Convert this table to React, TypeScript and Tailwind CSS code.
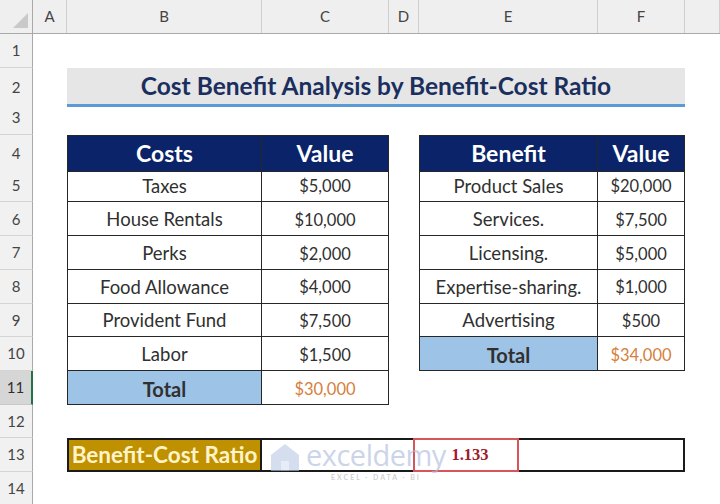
import React from "react";

const grid = "grid grid-cols-[33px_34px_195px_127px_30px_179px_87px_35px]";

function RowNum({ n, active = false }: { n: number; active?: boolean }) {
  return (
    <div
      className={
        active
          ? "flex items-center justify-center bg-[#d6d6d6] border-b border-[#c8c8c8] border-r-2 border-r-[#217346] text-[15px] text-[#2f2f2f]"
          : "flex items-center justify-center bg-[#f1f1f1] border-b border-[#d4d4d4] border-r border-r-[#a9a9a9] text-[15px] text-[#444]"
      }
    >
      {n}
    </div>
  );
}

const td = "flex items-center justify-center pt-[3px] border-b-[1.5px] border-r-[1.5px] border-[#262626] text-[#303030] whitespace-nowrap";
const th = "flex items-center justify-center bg-[#0b2469] border-t-[1.5px] border-b-[1.5px] border-r-[1.5px] border-[#262626] text-[23px] font-bold text-white";
const label = "text-[18.5px]";
const num = "text-[16.5px]";

export default function App() {
  const costs = [
    ["Taxes", "$5,000"],
    ["House Rentals", "$10,000"],
    ["Perks", "$2,000"],
    ["Food Allowance", "$4,000"],
    ["Provident Fund", "$7,500"],
    ["Labor", "$1,500"],
  ];
  const benefits = [
    ["Product Sales", "$20,000"],
    ["Services.", "$7,500"],
    ["Licensing.", "$5,000"],
    ["Expertise-sharing.", "$1,000"],
    ["Advertising", "$500"],
  ];

  return (
    <div className="relative w-[720px] h-[504px] overflow-hidden bg-white font-['Lato',sans-serif]">
      {/* column letters */}
      <div className={`${grid} h-[34px] bg-[#efefef] border-b border-[#a9a9a9] text-[15px] text-[#444]`}>
        <div className="relative border-r border-[#a9a9a9]">
          <div className="absolute right-[4px] bottom-[5px] w-0 h-0 border-l-[15px] border-l-transparent border-b-[15px] border-b-[#c9c9c9]" />
        </div>
        {["A", "B", "C", "D", "E", "F", ""].map((c, i) => (
          <div key={i} className="flex items-center justify-center border-r border-[#cfcfcf]">
            {c}
          </div>
        ))}
      </div>

      {/* row 1 */}
      <div className={`${grid} h-[33.7px]`}>
        <RowNum n={1} />
      </div>

      {/* row 2 - title */}
      <div className={`${grid} h-[33.7px]`}>
        <RowNum n={2} />
        <div />
        <div className="col-span-5 flex items-center justify-center bg-[#e6e6e6] border-b-[3px] border-[#5b9bd5] text-[24.5px] font-bold text-[#1b2f5e] whitespace-nowrap">
          Cost Benefit Analysis by Benefit-Cost Ratio
        </div>
      </div>

      {/* row 3 */}
      <div className={`${grid} h-[33.7px]`}>
        <RowNum n={3} />
      </div>

      {/* row 4 - table heads */}
      <div className={`${grid} h-[33.7px]`}>
        <RowNum n={4} />
        <div />
        <div className={`${th} border-l-[1.5px]`}>Costs</div>
        <div className={th}>Value</div>
        <div />
        <div className={`${th} border-l-[1.5px]`}>Benefit</div>
        <div className={th}>Value</div>
      </div>

      {/* rows 5-10 */}
      {costs.map((c, i) => {
        const b = benefits[i];
        return (
          <div key={i} className={`${grid} h-[33.7px]`}>
            <RowNum n={i + 5} />
            <div />
            <div className={`${td} ${label} border-l-[1.5px]`}>{c[0]}</div>
            <div className={`${td} ${num}`}>{c[1]}</div>
            <div />
            {b ? (
              <>
                <div className={`${td} ${label} border-l-[1.5px]`}>{b[0]}</div>
                <div className={`${td} ${num}`}>{b[1]}</div>
              </>
            ) : (
              <>
                <div className={`${td} border-l-[1.5px] bg-[#9dc3e6] font-bold text-[#10182b] text-[20px]`}>Total</div>
                <div className={`${td} ${num} text-[#d57f3c]`}>$34,000</div>
              </>
            )}
          </div>
        );
      })}

      {/* row 11 */}
      <div className={`${grid} h-[33.7px]`}>
        <RowNum n={11} active />
        <div />
        <div className={`${td} border-l-[1.5px] bg-[#9dc3e6] font-bold text-[#10182b] text-[20px]`}>Total</div>
        <div className={`${td} ${num} text-[#d57f3c]`}>$30,000</div>
      </div>

      {/* row 12 */}
      <div className={`${grid} h-[33.7px]`}>
        <RowNum n={12} />
      </div>

      {/* row 13 - ratio */}
      <div className={`${grid} h-[33.7px]`}>
        <RowNum n={13} />
        <div />
        <div className="flex items-center justify-center bg-[#bf9000] border-2 border-[#1a1a1a] text-[22.5px] font-bold text-[#fff3c8] whitespace-nowrap overflow-hidden">
          Benefit-Cost Ratio
        </div>
        <div className="relative col-span-4 border-y-2 border-r-2 border-[#1a1a1a]">
          <div className="absolute left-[151px] top-[-2px] w-[106px] h-[34px] border-2 border-[#d9545a] flex items-center justify-center pl-[8px] text-[16.5px] font-bold text-[#9e1b2b] font-['Liberation_Serif',serif]">
            1.133
          </div>
        </div>
      </div>

      {/* row 14 */}
      <div className={`${grid} h-[33.7px]`}>
        <RowNum n={14} />
      </div>

      {/* watermark */}
      <div className="absolute left-[268px] top-[441px] flex items-start gap-[4px] opacity-60 pointer-events-none">
        <svg width="34" height="34" viewBox="0 0 34 34">
          <path d="M17 3 L31 14 L31 30 L3 30 L3 14 Z" fill="#b9c9e4" />
          <path d="M13 30 L13 20 L21 20 L21 30 Z" fill="#d8e2f2" />
        </svg>
        <div className="flex flex-col items-center">
          <span className="text-[29px] font-['Open_Sans',sans-serif] text-[#a9b9dc] tracking-[-0.5px] leading-[28px]">exceldemy</span>
          <span className="text-[7px] leading-[8px] tracking-[2px] text-[#b5b5b5] font-bold mt-[4px]">EXCEL · DATA · BI</span>
        </div>
      </div>
    </div>
  );
}
